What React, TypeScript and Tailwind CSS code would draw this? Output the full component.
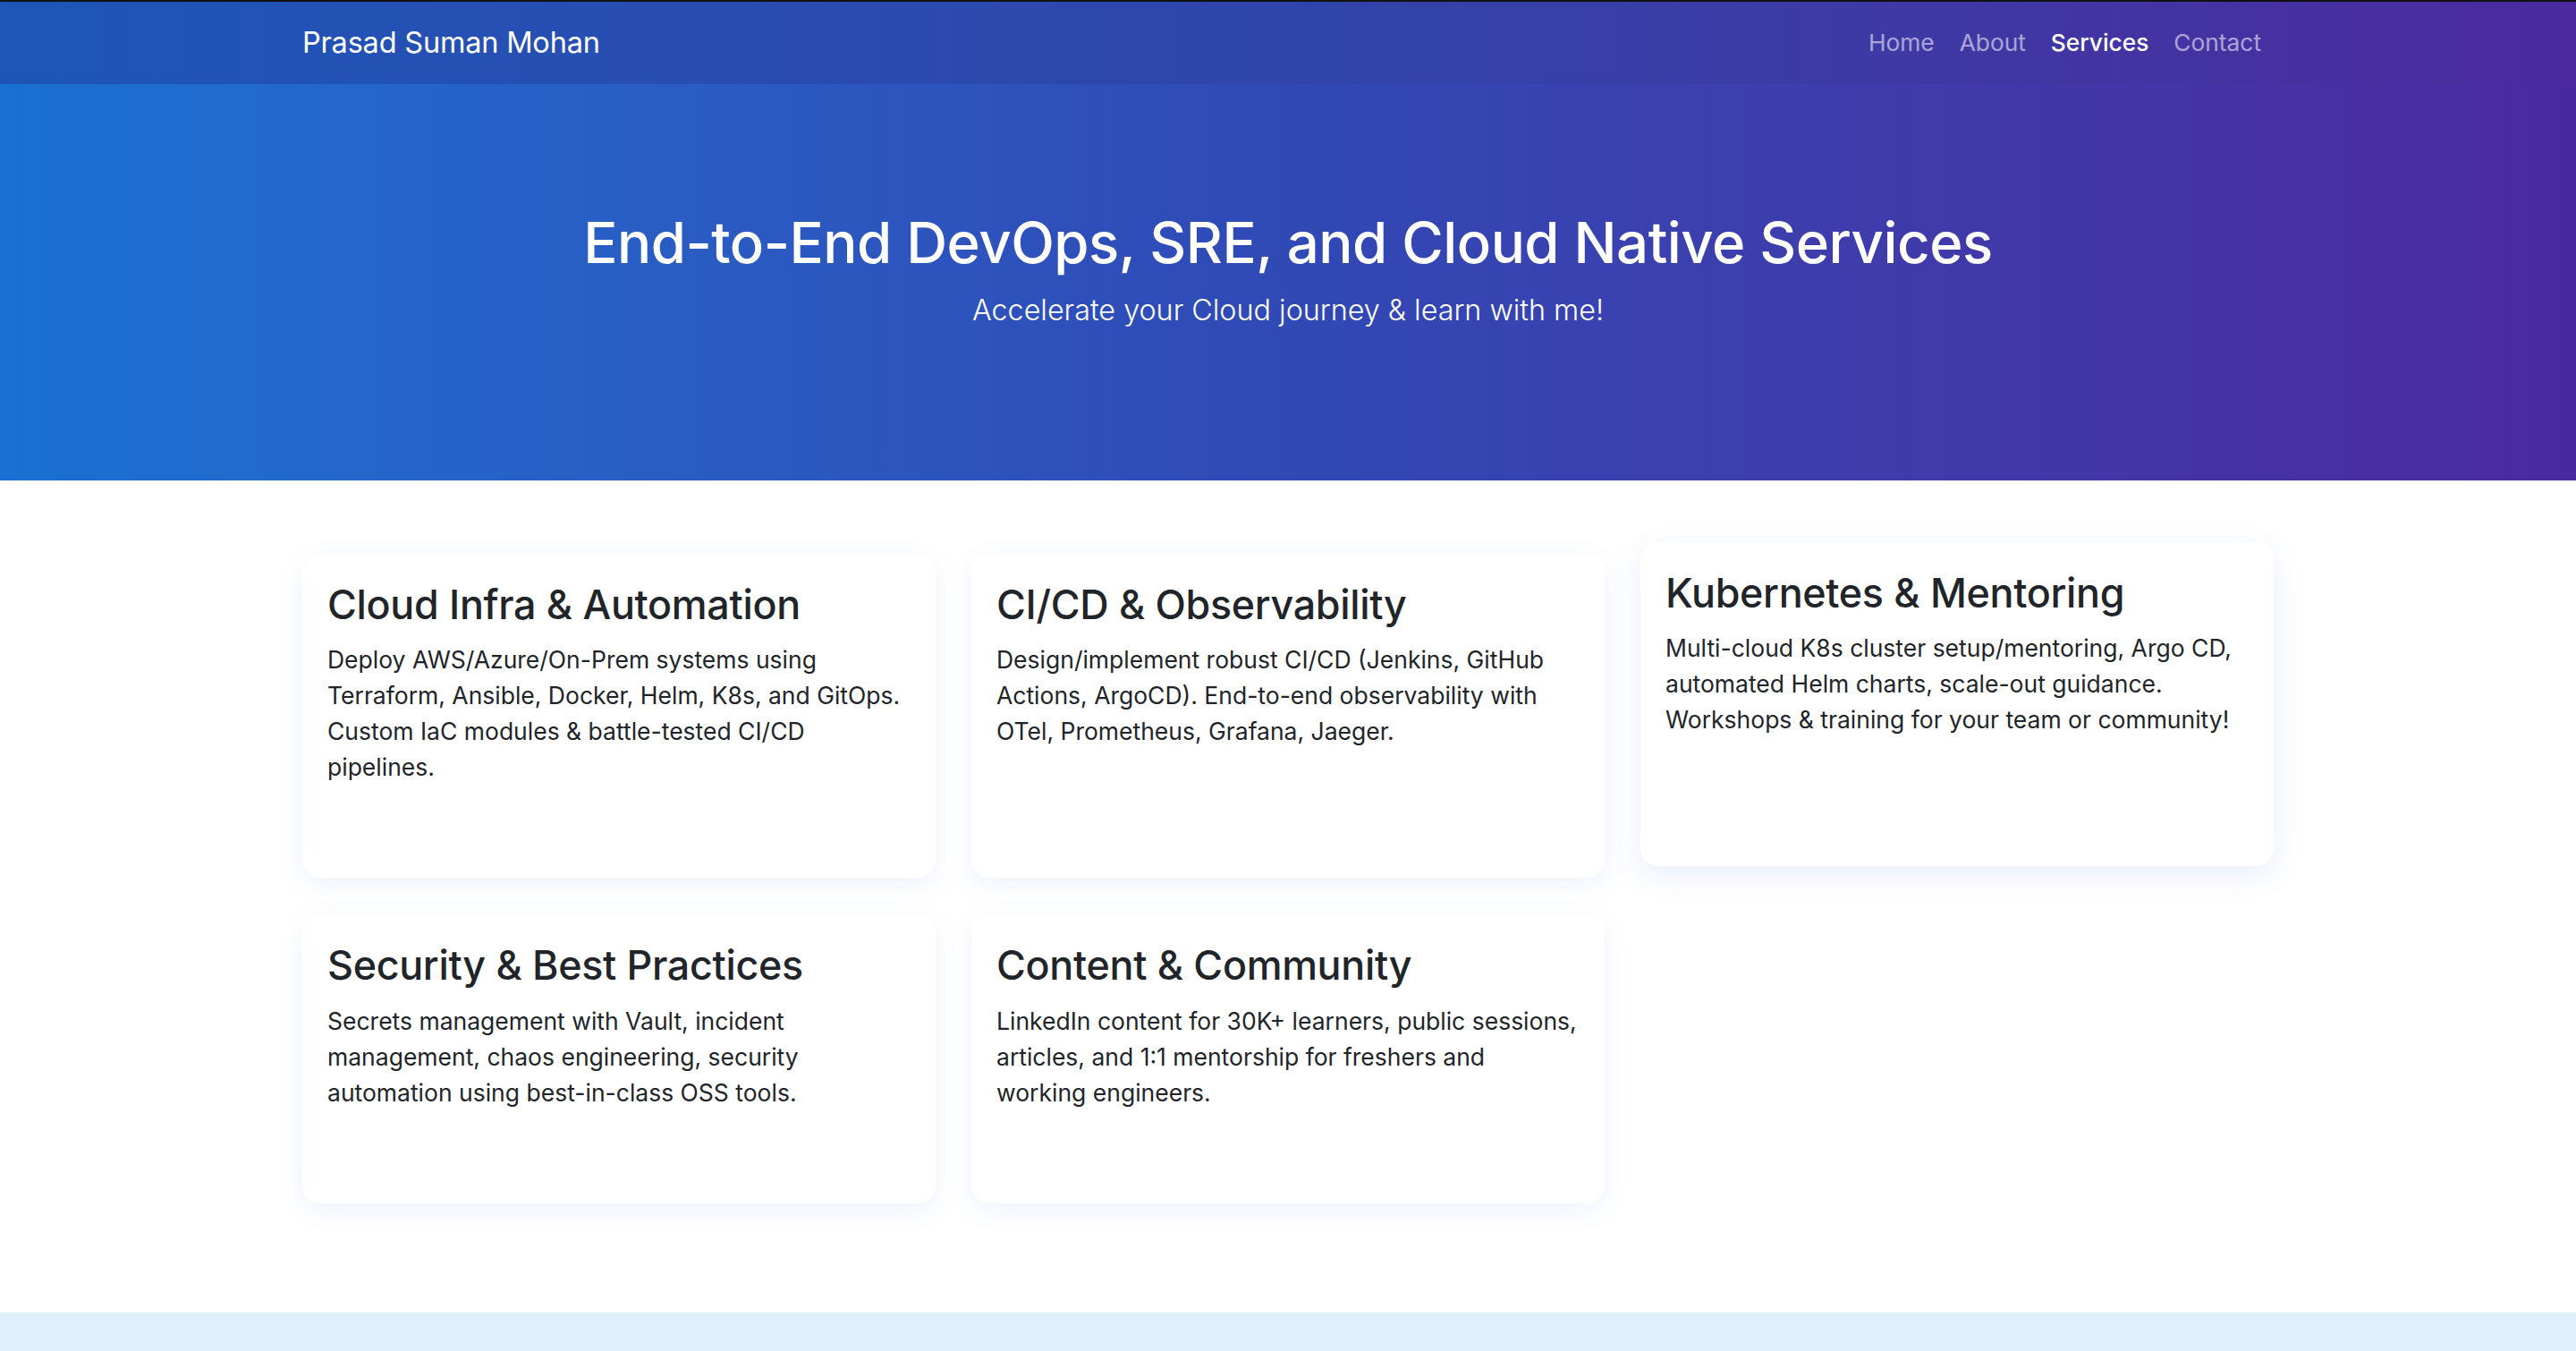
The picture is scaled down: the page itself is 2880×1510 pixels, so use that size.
const services = [
  {
    title: "Cloud Infra & Automation",
    text: "Deploy AWS/Azure/On-Prem systems using Terraform, Ansible, Docker, Helm, K8s, and GitOps. Custom IaC modules & battle-tested CI/CD pipelines.",
  },
  {
    title: "CI/CD & Observability",
    text: "Design/implement robust CI/CD (Jenkins, GitHub Actions, ArgoCD). End-to-end observability with OTel, Prometheus, Grafana, Jaeger.",
  },
  {
    title: "Kubernetes & Mentoring",
    text: "Multi-cloud K8s cluster setup/mentoring, Argo CD, automated Helm charts, scale-out guidance. Workshops & training for your team or community!",
    lifted: true,
  },
  {
    title: "Security & Best Practices",
    text: "Secrets management with Vault, incident management, chaos engineering, security automation using best-in-class OSS tools.",
  },
  {
    title: "Content & Community",
    text: "LinkedIn content for 30K+ learners, public sessions, articles, and 1:1 mentorship for freshers and working engineers.",
  },
]

const links = ["Home", "About", "Services", "Contact"]

export default function App() {
  return (
    <div className="min-h-screen bg-white text-[#212529] font-['Inter','Noto_Sans',sans-serif]">
      {/* Navbar */}
      <nav className="border-t-2 border-[#111] bg-gradient-to-r from-[#1d56b8] via-[#2f45ab] to-[#4a2a9e]">
        <div className="mx-auto flex h-[92px] w-[2204px] items-center justify-between">
          <a className="text-[32.5px] text-white tracking-[-0.2px]">Prasad Suman Mohan</a>
          <ul className="flex">
            {links.map((l) => (
              <li key={l}>
                <a
                  className={
                    l === "Services"
                      ? "block px-[14px] text-[26.3px] font-medium text-white"
                      : "block px-[14px] text-[26.3px] text-white/55"
                  }
                >
                  {l}
                </a>
              </li>
            ))}
          </ul>
        </div>
      </nav>

      {/* Hero */}
      <header className="bg-gradient-to-r from-[#1a71d3] via-[#3049b5] to-[#4a29a0] pt-[139px] pb-[138px] text-center text-white">
        <h1 className="mb-[14px] text-[63.5px] font-medium leading-[1.2] tracking-[-0.5px]">
          End-to-End DevOps, SRE, and Cloud Native Services
        </h1>
        <p className="mb-[27px] text-[32.3px] font-light leading-[1.5]">
          Accelerate your Cloud journey &amp; learn with me!
        </p>
      </header>

      {/* Services */}
      <section className="pt-[82px] pb-[122px]">
        <div className="mx-auto grid w-[2204px] grid-cols-3 gap-x-[40px] gap-y-[41px]">
          {services.map((s) => (
            <div
              key={s.title}
              className={
                s.lifted
                  ? "-translate-y-[13px] rounded-[20px] bg-white px-[28px] pt-[31px] pb-[104px] shadow-[0_10px_34px_rgba(30,100,210,0.1)]"
                  : "rounded-[20px] bg-white px-[28px] pt-[31px] pb-[104px] shadow-[0_8px_30px_rgba(30,100,210,0.08)]"
              }
            >
              <h3 className="mb-[14px] text-[44.8px] font-medium leading-[1.2] tracking-[-0.3px]">{s.title}</h3>
              <p className="text-[26.5px] leading-[40px]">{s.text}</p>
            </div>
          ))}
        </div>
      </section>

      {/* Next section */}
      <section className="h-[200px] bg-[#dfeffb]" />
    </div>
  )
}
